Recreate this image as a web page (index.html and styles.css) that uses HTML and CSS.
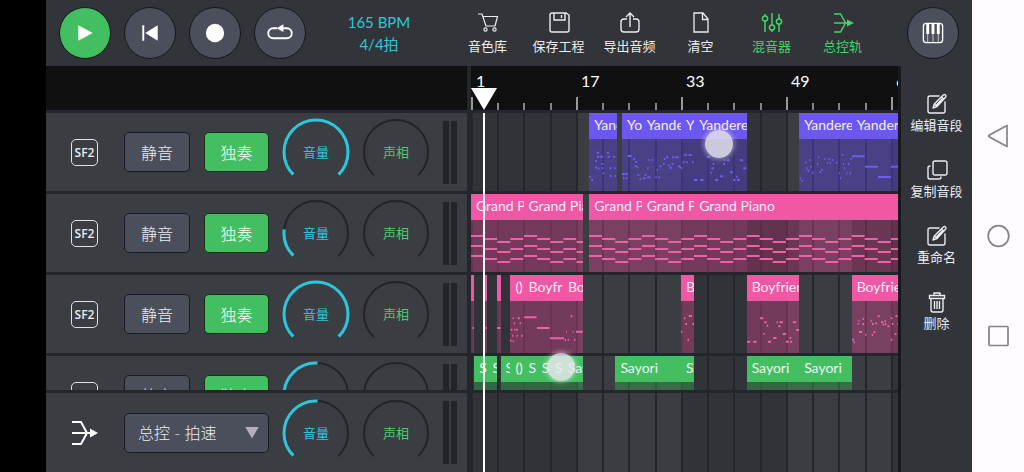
FILE: index.html
```html
<!DOCTYPE html>
<html lang="zh-CN">
<head>
<meta charset="utf-8">
<meta name="viewport" content="width=device-width, initial-scale=1">
<title>音轨编辑</title>
<link rel="stylesheet" href="styles.css">
</head>
<body>
<svg class="defs" aria-hidden="true">
  <symbol id="i-merge" viewBox="0 0 28 26"><path d="M1 2h9l6 11-6 11H1M1 13h20" fill="none" stroke="currentColor" stroke-width="2"/><path d="M19 8.500l8 4.500-8 4.500z" fill="currentColor"/></symbol>
  <symbol id="i-edit" viewBox="0 0 22 22"><path d="M13 3H4a2 2 0 0 0-2 2v13a2 2 0 0 0 2 2h13a2 2 0 0 0 2-2V9M7 15l1.300-4L17.500 1.800q1-.8 2 .2t.2 2L11 13.500zM15.500 3.800l2.400 2.400M8.300 11l2.700 2.500M10 12.500L16 6" fill="none" stroke="currentColor" stroke-width="1.400" stroke-linejoin="round" stroke-linecap="round"/></symbol>
  <symbol id="grand" viewBox="0 0 8 52" preserveAspectRatio="none"><path d="M0 16h2M2 19h2M4 22h2M6 19h2M0 26h2M2 29h2M4 32h2M6 29h2M0 36h2M2 39h2M4 42h2M6 39h2" fill="none" stroke="currentColor" stroke-width="2"/></symbol>
</svg>
<main class="app">
  <header class="topbar">
    <div class="transport">
      <button class="round play" aria-label="播放"><svg viewBox="0 0 52 52"><path d="M19 18l15 8-15 8z" fill="currentColor"/></svg></button>
      <button class="round" aria-label="回到开头"><svg viewBox="0 0 52 52"><path d="M18 18h2v16h-2zM34 18v16l-13-8z" fill="currentColor"/></svg></button>
      <button class="round" aria-label="录音"><svg viewBox="0 0 52 52"><circle cx="26" cy="26" r="9.500" fill="currentColor"/></svg></button>
      <button class="round" aria-label="循环"><svg viewBox="0 0 52 52"><path d="M23 21h-4a5 5 0 0 0 0 10.500h14a5 5 0 0 0 0-10.500h-5" fill="none" stroke="currentColor" stroke-width="2"/><path d="M22.500 21l7-4v8z" fill="currentColor"/></svg></button>
    </div>
    <button class="tempo"><span>165 BPM</span><span>4/4拍</span></button>
    <nav class="tools" aria-label="工具">
      <button class="tool"><svg viewBox="0 0 24 24"><path d="M2 4h4l4 12h9l2.500-9.500H7" fill="none" stroke="currentColor" stroke-width="1.200" stroke-linejoin="round"/><g fill="none" stroke="currentColor" stroke-width="1.200"><circle cx="9.500" cy="19.500" r="1.600"/><circle cx="18.500" cy="19.500" r="1.600"/></g></svg><span>音色库</span></button>
      <button class="tool"><svg viewBox="0 0 24 24"><path d="M5 3h14l3 2v15a2 2 0 0 1-2 2H5a2 2 0 0 1-2-2V5a2 2 0 0 1 2-2zM7 3v7h11V3M14.500 5v3" fill="none" stroke="currentColor" stroke-width="1.400"/></svg><span>保存工程</span></button>
      <button class="tool"><svg viewBox="0 0 24 24"><path d="M9 9H6a3 3 0 0 0-3 3v7a3 3 0 0 0 3 3h12a3 3 0 0 0 3-3v-7a3 3 0 0 0-3-3h-3M12 17V3M8 7l4-4 4 4" fill="none" stroke="currentColor" stroke-width="1.400"/></svg><span>导出音频</span></button>
      <button class="tool"><svg viewBox="0 0 24 24"><path d="M5 3h9l5 6v13H5zM13.500 3v6.500H19" fill="none" stroke="currentColor" stroke-width="1.300"/></svg><span>清空</span></button>
      <button class="tool on"><svg viewBox="0 0 24 24"><g fill="none" stroke="currentColor" stroke-width="1.500"><path d="M5 4v2M5 11v11M12 3v12M12 20v2M19 4v5M19 14v8"/><circle cx="5" cy="8.500" r="2.600"/><circle cx="12" cy="17.500" r="2.600"/><circle cx="19" cy="11.500" r="2.600"/></g></svg><span>混音器</span></button>
      <button class="tool on"><svg viewBox="0 0 24 24"><path d="M3 4h6.500l5 9-5 9H3M3 13h15" fill="none" stroke="currentColor" stroke-width="1.500"/><path d="M16 9.500l7 3.500-7 3.500z" fill="currentColor"/></svg><span>总控轨</span></button>
    </nav>
    <button class="round piano" aria-label="键盘"><svg viewBox="0 0 52 52"><rect x="16" y="16" width="20" height="20" rx="3" fill="none" stroke="currentColor" stroke-width="1.400"/><path d="M19 16h3v11h-3zM24.500 16h3v11h-3zM30 16h3v11h-3z" fill="currentColor"/><path d="M20.500 27v9M26 27v9M31.500 27v9" stroke="currentColor" stroke-width=".7"/></svg></button>
  </header>

  <div class="workspace">
    <section class="session">
      <div class="row ruler-row">
        <div class="ruler-blank"></div>
        <div class="ruler"><span>1</span><span>17</span><span>33</span><span>49</span><span>65</span></div>
      </div>

      <div class="tracks">
        <div class="row">
          <div class="strip">
            <span class="badge">SF2</span>
            <button class="key">静音</button><button class="key solo">独奏</button>
            <div class="knob volume"><svg viewBox="0 0 66 66"><path d="M10.400 55.600a32 32 0 1 1 45.200 0"/><path class="level" d="M10.400 55.600a32 32 0 1 1 45.200 0" pathLength="100" stroke-dasharray="100 200"/></svg><span>音量</span></div>
            <div class="knob pan"><svg viewBox="0 0 66 66"><path d="M10.400 55.600a32 32 0 1 1 45.200 0"/></svg><span>声相</span></div>
            <div class="meter"><i></i><i></i></div>
          </div>
          <div class="lane violet">
            <div class="clip" style="--start:18;--len:4.2"><b>Yandere</b><svg viewBox="387 237 83 156" preserveAspectRatio="none"><path d="M387 350h5M394 360h5M406 322h5M406 303h5M410 278h7M411 290h8M421 290h8M425 312h5M425 325h5M428 340h5M441 278h6M443 290h8M449 325h5M450 348h5M460 290h6M462 325h5M463 348h5M413 325h5"/></svg></div>
            <div class="clip" style="--start:23;--len:3"><b>Yo</b><svg viewBox="486 237 59 156" preserveAspectRatio="none"><path d="M486 342h8M496 342h8M489 355h5M498 355h5M503 288h12M520 297h5M526 306h5M524 319h5M530 322h5M533 345h5M538 358h7"/></svg></div>
            <div class="clip" style="--start:26;--len:6"><b>Yandere</b><svg viewBox="545 237 118 156" preserveAspectRatio="none"><path d="M548 355h8M553 345h5M560 325h5M561 352h5M564 300h4M567 352h4M574 300h4M585 352h4M589 330h4M594 352h4M598 318h5M608 312h5M610 297h5M617 292h7M623 316h5M627 323h7M634 312h5M635 292h7M645 292h9M653 318h5M657 322h6"/></svg></div>
            <div class="clip" style="--start:32;--len:2"><b>Y</b><svg viewBox="3 237 39 156" preserveAspectRatio="none"><path d="M3 325h4M8 307h5M13 285h7M18 307h5M26 285h9M36 307h5"/></svg></div>
            <div class="clip" style="--start:34;--len:8"><b>Yandere</b><svg viewBox="42 237 158 156" preserveAspectRatio="none"><path d="M42 360h10M61 360h10M81 290h9M98 312h5M94 325h8M91 338h5M105 360h10M120 349h9M130 312h5M132 301h5M141 301h9M150 337h9M160 360h6M169 350h5M171 360h9M180 301h9M190 325h9"/></svg></div>
            <div class="clip" style="--start:50;--len:8"><b>Yandere</b><svg viewBox="357 237 158 156" preserveAspectRatio="none"><path d="M359 355h4M364 362h4M375 307h4M379 325h4M383 332h4M387 300h4M391 320h4M396 338h4M411 312h4M414 292h4M419 337h4M424 330h4M433 297h4M441 308h4M446 297h4M449 310h4M456 300h4M469 308h4M477 340h4M480 355h4M486 285h4M489 312h4M492 325h4M499 340h4M504 312h4M509 340h5M511 297h4"/></svg></div>
            <div class="clip" style="--start:58;--len:12"><b>Yandere</b><svg viewBox="515 237 236 156" preserveAspectRatio="none"><path d="M515 289h38M554 320h39M593 351h38M632 320h39"/></svg></div>
          </div>
        </div>

        <div class="row">
          <div class="strip">
            <span class="badge">SF2</span>
            <button class="key">静音</button><button class="key solo">独奏</button>
            <div class="knob volume"><svg viewBox="0 0 66 66"><path d="M10.400 55.600a32 32 0 1 1 45.200 0"/><path class="level" d="M10.400 55.600a32 32 0 1 1 45.200 0" pathLength="100" stroke-dasharray="19 200"/></svg><span>音量</span></div>
            <div class="knob pan"><svg viewBox="0 0 66 66"><path d="M10.400 55.600a32 32 0 1 1 45.200 0"/></svg><span>声相</span></div>
            <div class="meter"><i></i><i></i></div>
          </div>
          <div class="lane pink">
            <div class="clip" style="--start:0;--len:8"><b>Grand Piano</b><svg viewBox="0 0 8 52" preserveAspectRatio="none"><use href="#grand" width="8" height="52"/></svg></div>
            <div class="clip" style="--start:8;--len:9"><b>Grand Piano</b><svg viewBox="0 0 9 52" preserveAspectRatio="none"><use href="#grand" width="8" height="52"/><path class="tail" d="M8 22h1M8 32h1M8 42h1"/></svg></div>
            <div class="clip" style="--start:18;--len:8"><b>Grand Piano</b><svg viewBox="0 0 8 52" preserveAspectRatio="none"><use href="#grand" width="8" height="52"/></svg></div>
            <div class="clip" style="--start:26;--len:8"><b>Grand Piano</b><svg viewBox="0 0 8 52" preserveAspectRatio="none"><use href="#grand" width="8" height="52"/></svg></div>
            <div class="clip looped" style="--start:34;--len:40"><b>Grand Piano</b><svg viewBox="0 0 40 52" preserveAspectRatio="none"><use href="#grand" width="8" height="52"/><use href="#grand" x="8" width="8" height="52"/><use href="#grand" x="16" width="8" height="52"/><use href="#grand" x="24" width="8" height="52"/><use href="#grand" x="32" width="8" height="52"/></svg></div>
          </div>
        </div>

        <div class="row">
          <div class="strip">
            <span class="badge">SF2</span>
            <button class="key">静音</button><button class="key solo">独奏</button>
            <div class="knob volume"><svg viewBox="0 0 66 66"><path d="M10.400 55.600a32 32 0 1 1 45.200 0"/><path class="level" d="M10.400 55.600a32 32 0 1 1 45.200 0" pathLength="100" stroke-dasharray="100 200"/></svg><span>音量</span></div>
            <div class="knob pan"><svg viewBox="0 0 66 66"><path d="M10.400 55.600a32 32 0 1 1 45.200 0"/></svg><span>声相</span></div>
            <div class="meter"><i></i><i></i></div>
          </div>
          <div class="lane pink">
            <div class="clip" style="--start:0;--len:0.5"><b></b><svg viewBox="0 0 9 156" preserveAspectRatio="none"><path d="M4 81h5"/></svg></div>
            <div class="clip" style="--start:2;--len:0.5"><b></b><svg viewBox="0 0 9 156" preserveAspectRatio="none"><path d="M4 81h5"/></svg></div>
            <div class="clip" style="--start:4;--len:0.5"><b></b><svg viewBox="0 0 9 156" preserveAspectRatio="none"><path d="M0 81h9"/></svg></div>
            <div class="clip" style="--start:6;--len:2"><b>()</b><svg viewBox="151 126 39 156" preserveAspectRatio="none"><path d="M151 245h4M153 212h5M157 230h4M159 178h4M162 193h4M163 212h4M169 212h5M170 230h4M174 178h6M180 193h4M184 230h5M159 247h3"/></svg></div>
            <div class="clip" style="--start:8;--len:6"><b>Boyfriend</b><svg viewBox="190 126 118 156" preserveAspectRatio="none"><path d="M190 175h38M229 207h38M268 238h40"/></svg></div>
            <div class="clip" style="--start:14;--len:3"><b>Boyfriend</b><svg viewBox="308 126 59 156" preserveAspectRatio="none"><path d="M308 238h3M313 243h4M317 218h3M322 242h4M331 172h5M337 218h3M341 242h4M347 218h20"/></svg></div>
            <div class="clip" style="--start:32;--len:2"><b>B</b><svg viewBox="3 126 39 156" preserveAspectRatio="none"><path d="M3 218h4M12 178h4M16 195h5M22 242h5M26 171h10M37 195h5"/></svg></div>
            <div class="clip" style="--start:42;--len:8"><b>Boyfriend</b><svg viewBox="199 126 158 156" preserveAspectRatio="none"><path d="M199 248h10M218 248h10M238 178h10M248 225h4M251 190h7M258 200h5M262 248h10M278 237h10M288 190h4M293 202h7M297 190h10M307 225h10M316 248h9M327 237h5M329 248h6M337 190h10M347 213h10"/></svg></div>
            <div class="clip" style="--start:58;--len:12"><b>Boyfriend</b><svg viewBox="515 126 236 156" preserveAspectRatio="none"><path d="M516 242h5M520 250h4M532 195h3M534 185h3M536 219h7M547 180h4M542 218h4M554 227h4M546 195h5M570 185h4M575 195h5M574 228h4M579 220h6M585 193h5M592 172h6M602 190h7M607 197h5M612 187h5M614 195h4M621 202h6M631 242h5M631 178h5M635 195h4M643 225h5M645 172h6M651 195h5"/></svg></div>
          </div>
        </div>

        <div class="row">
          <div class="strip">
            <span class="badge">SF2</span>
            <button class="key">静音</button><button class="key solo">独奏</button>
            <div class="knob volume"><svg viewBox="0 0 66 66"><path d="M10.400 55.600a32 32 0 1 1 45.200 0"/><path class="level" d="M10.400 55.600a32 32 0 1 1 45.200 0" pathLength="100" stroke-dasharray="51 200"/></svg></div>
            <div class="knob pan"><svg viewBox="0 0 66 66"><path d="M10.400 55.600a32 32 0 1 1 45.200 0"/></svg></div>
            <div class="meter"><i></i><i></i></div>
          </div>
          <div class="lane green">
            <div class="clip" style="--start:0.5;--len:2"><b>S</b></div>
            <div class="clip" style="--start:2.5;--len:1.5"><b>S</b></div>
            <div class="clip" style="--start:4.5;--len:1.5"><b>S</b></div>
            <div class="clip" style="--start:6;--len:2"><b>()</b></div>
            <div class="clip" style="--start:8;--len:2"><b>S</b></div>
            <div class="clip" style="--start:10;--len:2"><b>S</b></div>
            <div class="clip" style="--start:12;--len:2"><b>S</b></div>
            <div class="clip" style="--start:14;--len:3"><b>Sayori</b></div>
            <div class="clip" style="--start:22;--len:10"><b>Sayori</b></div>
            <div class="clip" style="--start:32;--len:2"><b>Sayori</b></div>
            <div class="clip" style="--start:42;--len:8"><b>Sayori</b></div>
            <div class="clip" style="--start:50;--len:8"><b>Sayori</b></div>
          </div>
        </div>
      </div>

      <div class="row master">
        <div class="strip">
          <svg class="merge" aria-hidden="true"><use href="#i-merge"/></svg>
          <label class="picker"><select aria-label="总控参数"><option>总控 - 拍速</option></select></label>
          <div class="knob volume"><svg viewBox="0 0 66 66"><path d="M10.400 55.600a32 32 0 1 1 45.200 0"/><path class="level" d="M10.400 55.600a32 32 0 1 1 45.200 0" pathLength="100" stroke-dasharray="51 200"/></svg><span>音量</span></div>
          <div class="knob pan"><svg viewBox="0 0 66 66"><path d="M10.400 55.600a32 32 0 1 1 45.200 0"/></svg><span>声相</span></div>
          <div class="meter"><i></i><i></i></div>
        </div>
        <div class="lane"></div>
      </div>

      <div class="overlay" aria-hidden="true">
        <div class="playhead"></div>
        <i class="touch first"></i>
        <i class="touch second"></i>
      </div>
    </section>

    <aside class="actions">
      <button class="action"><svg viewBox="0 0 22 22"><use href="#i-edit"/></svg><span>编辑音段</span></button>
      <button class="action"><svg viewBox="0 0 22 22"><g fill="none" stroke="currentColor" stroke-width="1.400" stroke-linecap="round"><rect x="7" y="2" width="14" height="14" rx="2"/><path d="M4 7a2 2 0 0 0-2 2v9a2 2 0 0 0 2 2h9a2 2 0 0 0 2-2"/></g></svg><span>复制音段</span></button>
      <button class="action"><svg viewBox="0 0 22 22"><use href="#i-edit"/></svg><span>重命名</span></button>
      <button class="action"><svg viewBox="0 0 22 22"><path d="M3.500 4.500h15v3h-15zM8 4.500V2h6v2.500M5 7.500V19a2 2 0 0 0 2 2h8a2 2 0 0 0 2-2V7.500M8.500 10v8M11 10v8M13.500 10v8" fill="none" stroke="currentColor" stroke-width="1.400"/></svg><span>删除</span></button>
    </aside>
  </div>
</main>
<nav class="system" aria-label="系统导航">
  <button aria-label="返回"><svg viewBox="0 0 24 24"><path d="M21 1.500v21L3.500 13q-1.500-1 0-2z" fill="none" stroke="currentColor" stroke-width="1.700" stroke-linejoin="round"/></svg></button>
  <button aria-label="主页"><svg viewBox="0 0 24 24"><circle cx="12.500" cy="12" r="10.300" fill="none" stroke="currentColor" stroke-width="1.700"/></svg></button>
  <button aria-label="最近任务"><svg viewBox="0 0 24 24"><rect x="3" y="2.500" width="19" height="19" rx="1" fill="none" stroke="currentColor" stroke-width="1.700"/></svg></button>
</nav>
</body>
</html>
```
FILE: styles.css
```css
:root {
  --bar: calc(105px / 16);
  --panel: #313439;
  --strip: #3a3d42;
  --gap: #23262a;
  --key: #4b4e5b;
  --green: #43bf62;
  --cyan: #2fc6dc;
}
* { box-sizing: border-box; }
body {
  margin: 0;
  padding-left: 46px;
  height: 100vh;
  display: flex;
  overflow: hidden;
  background: #000;
  color: #ececf0;
  font-family: Lato, "Noto Sans CJK SC", sans-serif;
}
button, select { font: inherit; color: inherit; border: 0; padding: 0; background: none; }
button { cursor: pointer; }
svg { display: block; }
.defs { position: absolute; width: 0; height: 0; }

.app { flex: 1; min-width: 0; display: flex; flex-direction: column; background: var(--panel); }

/* top bar */
.topbar { height: 66px; flex: none; display: flex; align-items: center; padding: 0 13px; }
.transport { display: flex; gap: 13px; }
.round {
  width: 52px; height: 52px; flex: none;
  border: 1px solid #15171a; border-radius: 50%;
  background: var(--key); color: #fff;
}
.round svg { width: 50px; height: 50px; }
.play { background: var(--green); }
.piano { margin-left: auto; }
.tempo {
  width: 146px; display: flex; flex-direction: column; align-items: center;
  color: var(--cyan); font-size: 15px; line-height: 22px;
}
.tools { display: flex; }
.tool { width: 71px; display: flex; flex-direction: column; align-items: center; gap: 2px; font-size: 13px; line-height: 20px; white-space: nowrap; }
.tool svg { width: 24px; height: 24px; }
.tool.on { color: #48d267; }

/* workspace */
.workspace { flex: 1; min-height: 0; display: flex; }
.session {
  position: relative; flex: 1; min-width: 0;
  display: flex; flex-direction: column; gap: 3px;
  border-right: 3px solid #17191c;
  background: var(--gap);
}
.row { display: grid; grid-template-columns: 421px minmax(0, 1fr); column-gap: 4px; flex: none; height: 78px; }
.ruler-row { height: 44px; }
.ruler-blank { background: #101010; }
.ruler {
  display: grid; grid-auto-flow: column; grid-auto-columns: 105px; justify-content: start;
  overflow: hidden; padding-top: 4px;
  font-size: 16px; line-height: 22px; color: #fff;
  background:
    repeating-linear-gradient(90deg, #999 0 2px, transparent 2px 105px) 0 100% / 100% 13px no-repeat,
    repeating-linear-gradient(90deg, #858585 0 2px, transparent 2px calc(105px / 4)) 0 100% / 100% 7px no-repeat,
    #101010;
}
.ruler span { padding-left: 5px; }
.tracks { flex: 1; min-height: 0; overflow: hidden; display: flex; flex-direction: column; gap: 3px; }
.master { height: 79px; }

/* mixer strip */
.strip {
  display: grid; grid-template-columns: 39px 66px 65px 66px 66px 14px;
  column-gap: 14px; align-items: center; padding-left: 25px;
  background: var(--strip);
}
.badge {
  width: 27px; height: 27px; border: 1px solid #e2e2e6; border-radius: 5px;
  font: 600 12px/25px "Open Sans", sans-serif; text-align: center;
}
.merge { width: 28px; height: 26px; color: #fff; }
.key {
  height: 40px; border: 1px solid #191b20; border-radius: 5px;
  background: var(--key); font-size: 16px; font-weight: 300;
}
.solo { background: var(--green); color: #fff; border-color: #12301b; }
.picker { grid-column: 2 / 4; position: relative; }
.picker select {
  appearance: none; width: 100%; height: 40px; padding: 0 13px;
  border: 1px solid #191b20; border-radius: 5px;
  background: var(--key); font-size: 16px; font-weight: 300;
}
.picker::after {
  content: ""; position: absolute; right: 10px; top: 14px;
  width: 14px; height: 12px; background: #b3b0bb;
  clip-path: polygon(0 0, 100% 0, 50% 100%); pointer-events: none;
}
.knob { display: grid; place-items: center; font-size: 13px; line-height: 20px; }
.knob > * { grid-area: 1 / 1; }
.knob svg { width: 66px; height: 66px; overflow: visible; fill: none; stroke: #212428; stroke-width: 2; stroke-linecap: round; }
.knob .level { stroke: var(--cyan); stroke-width: 3; stroke-linecap: butt; }
.volume { color: var(--cyan); }
.pan { color: #4fc86a; }
.meter { display: flex; gap: 2px; height: 63px; }
.meter i { flex: 1; background: #212428; }

/* timeline */
.lane {
  position: relative; overflow: hidden;
  background:
    repeating-linear-gradient(90deg, var(--gap) 0 2px, transparent 2px calc(105px / 4)),
    repeating-linear-gradient(90deg, #303338 0 105px, #3a3d42 105px 210px);
}
.violet { --solid: #6c57f0; --tint: rgb(92 72 215 / 45%); --note: #6f5cf0; }
.pink { --solid: #f058a5; --tint: rgb(225 72 150 / 38%); --note: #eb62a6; }
.green { --solid: #43bf62; --tint: rgb(60 180 90 / 40%); --note: #43bf62; }
.clip {
  position: absolute; top: 0; bottom: 0;
  left: calc(var(--start) * var(--bar)); width: calc(var(--len) * var(--bar));
  overflow: hidden; background: var(--tint); color: var(--note);
}
.clip b {
  display: block; height: 26px; padding-left: 5px; overflow: hidden;
  background: var(--solid); color: #f4eefa;
  font-size: 14px; font-weight: 400; line-height: 24px; white-space: nowrap;
}
.clip b:empty { padding: 0; }
.clip svg { width: 100%; height: 52px; }
.clip path { fill: none; stroke: var(--note); stroke-width: 6; }
.clip .tail, #grand path { stroke-width: 2; }
.looped {
  background:
    linear-gradient(90deg, transparent 20%, rgb(0 0 0 / 14%) 20% 40%, transparent 40% 60%, rgb(0 0 0 / 14%) 60%),
    var(--tint);
}
.overlay { position: absolute; top: 0; bottom: 0; left: 425px; right: 0; pointer-events: none; }
.playhead { position: absolute; left: 0; top: 22px; bottom: 0; width: 26px; }
.playhead::before { content: ""; display: block; height: 22px; background: #fff; clip-path: polygon(0 0, 100% 0, 50% 100%); }
.playhead::after { content: ""; position: absolute; top: 25px; bottom: 0; left: 12px; width: 2px; background: #fff; }
.touch { position: absolute; width: 28px; height: 28px; border-radius: 50%; background: rgb(235 232 240 / 82%); box-shadow: 0 0 5px 1px rgb(255 255 255 / 50%); }
.first { left: 234px; top: 64px; }
.second { left: 76px; top: 287px; }

/* clip actions */
.actions { width: 71px; flex: none; display: flex; flex-direction: column; gap: 24px; padding-top: 27px; }
.action { display: flex; flex-direction: column; align-items: center; font-size: 13px; line-height: 20px; white-space: nowrap; }
.action svg { width: 22px; height: 22px; }

/* system navigation */
.system { width: 52px; flex: none; display: flex; flex-direction: column; align-items: center; justify-content: center; gap: 76px; background: #fffbff; color: #858287; }
.system button, .system svg { width: 24px; height: 24px; }
```
